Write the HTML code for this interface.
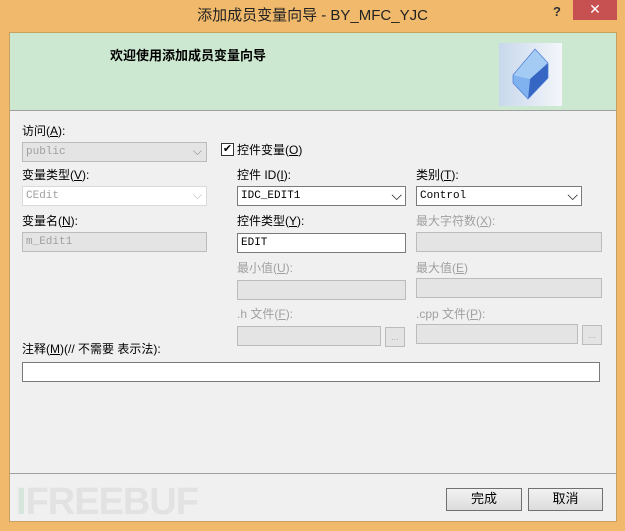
<!DOCTYPE html>
<html><head><meta charset="utf-8"><style>
*{margin:0;padding:0;box-sizing:border-box}
body{width:625px;height:531px;background:#f0b96b;position:relative;overflow:hidden;font-family:"Liberation Sans","Noto Sans CJK SC",sans-serif;font-size:12px;color:#000}
.a{position:absolute}
.t{position:absolute;font-size:12px;line-height:14px;white-space:nowrap}
.g{color:#a0a0a0}
.box{position:absolute;border:1px solid #bcbcbc;background:#e4e4e4;height:20px}
.w{background:#fff;border-color:#7a7a7a}
.mono{font-family:"Liberation Mono",monospace;font-size:11px;padding:3px 0 0 3px;line-height:13px}
.btn{position:absolute;border:1px solid #707070;background:linear-gradient(#f2f2f2,#dcdcdc);text-align:center;line-height:20px;font-size:13px}
</style></head><body>
<div class="t" style="left:0;width:625px;text-align:center;top:7px;font-size:15px;line-height:18px;color:#222">添加成员变量向导 - BY_MFC_YJC</div>
<div class="t" style="left:553px;top:5px;font-size:13px;font-weight:bold;color:#333">?</div>
<div class="a" style="left:573px;top:0;width:44px;height:20px;background:#c75050;color:#fff;text-align:center;font-size:14px;line-height:19px">✕</div>
<div class="a" style="left:9px;top:32px;width:608px;height:490px;background:#f0f0f0;border:1px solid #c8a060"></div>
<div class="a" style="left:10px;top:33px;width:606px;height:78px;background:#cce8d0;border-bottom:1px solid #a0a0a0"></div>
<div class="t" style="left:110px;top:49px;font-weight:bold;font-size:13px">欢迎使用添加成员变量向导</div>
<div class="a" style="left:499px;top:43px;width:63px;height:63px;background:linear-gradient(90deg,#c8d8ec,#f4f6fa)">
<svg width="63" height="63"><polygon points="36,6 49,20 31,36 14,32" fill="#a4cbf4"/><polygon points="14,32 31,36 29,56 14,40" fill="#7fb2ee"/><polygon points="49,20 49,35 29,56 31,36" fill="#3566c4"/><polygon points="36,6 49,20 49,35 29,56 14,40 14,32" fill="none" stroke="#4a7ad6" stroke-width="0.7"/></svg></div>
<div class="t" style="left:22px;top:124px">访问(<u>A</u>):</div>
<div class="box" style="left:22px;top:142px;width:185px"><span class="mono g" style="position:absolute;left:0;top:0">public</span><span class="a" style="right:4px;top:1px;color:#888">⌵</span></div>
<div class="a" style="left:221px;top:143px;width:13px;height:13px;border:1px solid #333;background:#fff;font-size:11px;line-height:11px;text-align:center">✔</div>
<div class="t" style="left:237px;top:143px">控件变量(<u>O</u>)</div>
<div class="t" style="left:22px;top:168px">变量类型(<u>V</u>):</div>
<div class="box" style="left:22px;top:186px;width:185px;background:#fff;border-color:#dadada"><span class="mono g" style="position:absolute;left:0;top:0">CEdit</span><span class="a" style="right:4px;top:1px;color:#bbb">⌵</span></div>
<div class="t" style="left:22px;top:214px">变量名(<u>N</u>):</div>
<div class="box" style="left:22px;top:232px;width:185px"><span class="mono g" style="position:absolute;left:0;top:0">m_Edit1</span></div>
<div class="t" style="left:237px;top:168px">控件 ID(<u>I</u>):</div>
<div class="box w" style="left:237px;top:186px;width:169px"><span class="mono" style="position:absolute;left:0;top:0">IDC_EDIT1</span><span class="a" style="right:3px;top:0;font-size:14px">⌵</span></div>
<div class="t" style="left:416px;top:168px">类别(<u>T</u>):</div>
<div class="box w" style="left:416px;top:186px;width:166px"><span class="mono" style="position:absolute;left:0;top:0">Control</span><span class="a" style="right:3px;top:0;font-size:14px">⌵</span></div>
<div class="t" style="left:237px;top:214px">控件类型(<u>Y</u>):</div>
<div class="box w" style="left:237px;top:233px;width:169px"><span class="mono" style="position:absolute;left:0;top:0">EDIT</span></div>
<div class="t g" style="left:416px;top:214px">最大字符数(<u>X</u>):</div>
<div class="box" style="left:416px;top:232px;width:186px"></div>
<div class="t g" style="left:237px;top:261px">最小值(<u>U</u>):</div>
<div class="box" style="left:237px;top:280px;width:169px"></div>
<div class="t g" style="left:416px;top:261px">最大值(<u>E</u>)</div>
<div class="box" style="left:416px;top:278px;width:186px"></div>
<div class="t g" style="left:237px;top:307px">.h 文件(<u>F</u>):</div>
<div class="box" style="left:237px;top:326px;width:144px"></div>
<div class="box" style="left:385px;top:327px;width:20px;font-size:9px;color:#aaa;text-align:center;line-height:18px">...</div>
<div class="t g" style="left:416px;top:307px">.cpp 文件(<u>P</u>):</div>
<div class="box" style="left:416px;top:324px;width:162px"></div>
<div class="box" style="left:582px;top:325px;width:20px;font-size:9px;color:#aaa;text-align:center;line-height:18px">...</div>
<div class="t" style="left:22px;top:342px">注释(<u>M</u>)(// 不需要 表示法):</div>
<div class="a" style="left:22px;top:362px;width:578px;height:20px;background:#fff;border:1px solid #7a7a7a"></div>
<div class="a" style="left:10px;top:473px;width:606px;height:1px;background:#a0a0a0"></div>
<div class="t" style="left:16px;top:482px;font-size:38px;line-height:40px;font-weight:bold;color:#e2e2e2;letter-spacing:-1px"><span style="color:#d6e6dc">I</span>FREEBUF</div>
<div class="btn" style="left:446px;top:488px;width:76px;height:23px">完成</div>
<div class="btn" style="left:528px;top:488px;width:75px;height:23px">取消</div>
</body></html>
